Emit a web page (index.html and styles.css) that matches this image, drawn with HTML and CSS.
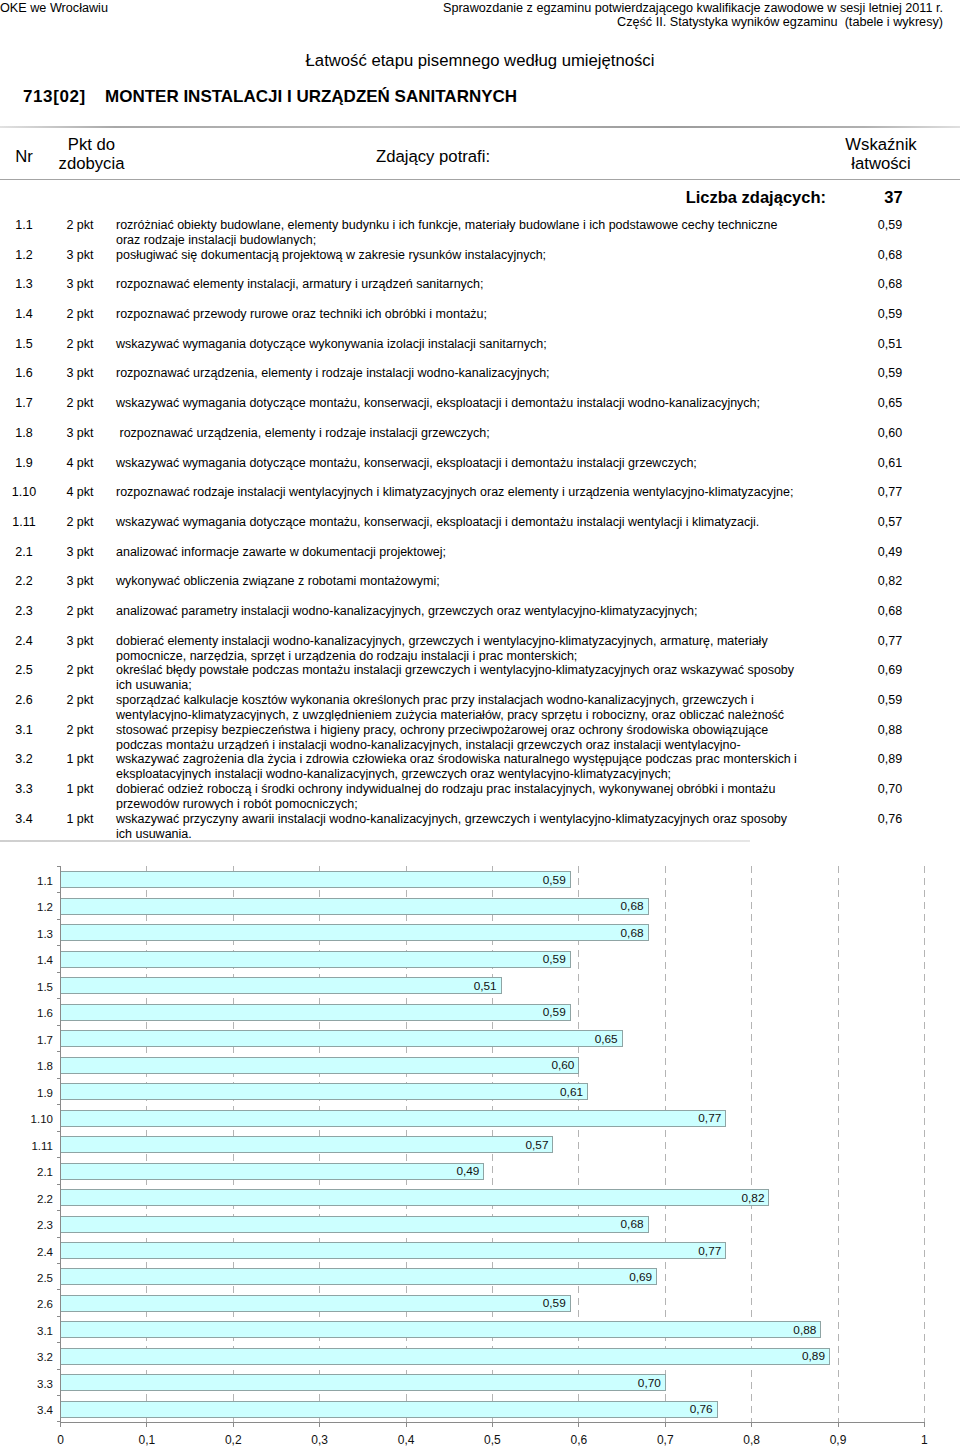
FILE: index.html
```html
<!DOCTYPE html>
<html lang="pl">
<head>
<meta charset="utf-8">
<title>Łatwość etapu pisemnego według umiejętności</title>
<link rel="stylesheet" href="styles.css">
</head>
<body>
<div class="page">
  <header class="top">
    <div class="top-left">OKE we Wrocławiu</div>
    <div class="top-right">
      <div>Sprawozdanie z egzaminu potwierdzającego kwalifikacje zawodowe w sesji letniej 2011 r.</div>
      <div>Część II. Statystyka wyników egzaminu&nbsp; (tabele i wykresy)</div>
    </div>
  </header>

  <h1 class="title">Łatwość etapu pisemnego według umiejętności</h1>
  <h2 class="subtitle"><span class="code">713[02]</span><span>MONTER INSTALACJI I URZĄDZEŃ SANITARNYCH</span></h2>

  <div class="rule-top"></div>
  <div class="thead">
    <div class="th th-single">Nr</div>
    <div class="th th-multi">Pkt do<br>zdobycia</div>
    <div class="th th-single th-desc">Zdający potrafi:</div>
    <div class="th th-multi">Wskaźnik<br>łatwości</div>
  </div>
  <div class="rule"></div>
  <div class="count">
    <div class="count-label">Liczba zdających:</div>
    <div class="count-val">37</div>
  </div>

  <div class="rows">
    <div class="row"><div class="c-nr">1.1</div><div class="c-pkt">2 pkt</div><div class="c-desc">rozróżniać obiekty budowlane, elementy budynku i ich funkcje, materiały budowlane i ich podstawowe cechy techniczne<br>oraz rodzaje instalacji budowlanych;</div><div class="c-val">0,59</div></div>
    <div class="row"><div class="c-nr">1.2</div><div class="c-pkt">3 pkt</div><div class="c-desc">posługiwać się dokumentacją projektową w zakresie rysunków instalacyjnych;</div><div class="c-val">0,68</div></div>
    <div class="row"><div class="c-nr">1.3</div><div class="c-pkt">3 pkt</div><div class="c-desc">rozpoznawać elementy instalacji, armatury i urządzeń sanitarnych;</div><div class="c-val">0,68</div></div>
    <div class="row"><div class="c-nr">1.4</div><div class="c-pkt">2 pkt</div><div class="c-desc">rozpoznawać przewody rurowe oraz techniki ich obróbki i montażu;</div><div class="c-val">0,59</div></div>
    <div class="row"><div class="c-nr">1.5</div><div class="c-pkt">2 pkt</div><div class="c-desc">wskazywać wymagania dotyczące wykonywania izolacji instalacji sanitarnych;</div><div class="c-val">0,51</div></div>
    <div class="row"><div class="c-nr">1.6</div><div class="c-pkt">3 pkt</div><div class="c-desc">rozpoznawać urządzenia, elementy i rodzaje instalacji wodno-kanalizacyjnych;</div><div class="c-val">0,59</div></div>
    <div class="row"><div class="c-nr">1.7</div><div class="c-pkt">2 pkt</div><div class="c-desc">wskazywać wymagania dotyczące montażu, konserwacji, eksploatacji i demontażu instalacji wodno-kanalizacyjnych;</div><div class="c-val">0,65</div></div>
    <div class="row"><div class="c-nr">1.8</div><div class="c-pkt">3 pkt</div><div class="c-desc">&nbsp;rozpoznawać urządzenia, elementy i rodzaje instalacji grzewczych;</div><div class="c-val">0,60</div></div>
    <div class="row"><div class="c-nr">1.9</div><div class="c-pkt">4 pkt</div><div class="c-desc">wskazywać wymagania dotyczące montażu, konserwacji, eksploatacji i demontażu instalacji grzewczych;</div><div class="c-val">0,61</div></div>
    <div class="row"><div class="c-nr">1.10</div><div class="c-pkt">4 pkt</div><div class="c-desc">rozpoznawać rodzaje instalacji wentylacyjnych i klimatyzacyjnych oraz elementy i urządzenia wentylacyjno-klimatyzacyjne;</div><div class="c-val">0,77</div></div>
    <div class="row"><div class="c-nr">1.11</div><div class="c-pkt">2 pkt</div><div class="c-desc">wskazywać wymagania dotyczące montażu, konserwacji, eksploatacji i demontażu instalacji wentylacji i klimatyzacji.</div><div class="c-val">0,57</div></div>
    <div class="row"><div class="c-nr">2.1</div><div class="c-pkt">3 pkt</div><div class="c-desc">analizować informacje zawarte w dokumentacji projektowej;</div><div class="c-val">0,49</div></div>
    <div class="row"><div class="c-nr">2.2</div><div class="c-pkt">3 pkt</div><div class="c-desc">wykonywać obliczenia związane z robotami montażowymi;</div><div class="c-val">0,82</div></div>
    <div class="row"><div class="c-nr">2.3</div><div class="c-pkt">2 pkt</div><div class="c-desc">analizować parametry instalacji wodno-kanalizacyjnych, grzewczych oraz wentylacyjno-klimatyzacyjnych;</div><div class="c-val">0,68</div></div>
    <div class="row"><div class="c-nr">2.4</div><div class="c-pkt">3 pkt</div><div class="c-desc">dobierać elementy instalacji wodno-kanalizacyjnych, grzewczych i wentylacyjno-klimatyzacyjnych, armaturę, materiały<br>pomocnicze, narzędzia, sprzęt i urządzenia do rodzaju instalacji i prac monterskich;</div><div class="c-val">0,77</div></div>
    <div class="row"><div class="c-nr">2.5</div><div class="c-pkt">2 pkt</div><div class="c-desc">określać błędy powstałe podczas montażu instalacji grzewczych i wentylacyjno-klimatyzacyjnych oraz wskazywać sposoby<br>ich usuwania;</div><div class="c-val">0,69</div></div>
    <div class="row"><div class="c-nr">2.6</div><div class="c-pkt">2 pkt</div><div class="c-desc">sporządzać kalkulacje kosztów wykonania określonych prac przy instalacjach wodno-kanalizacyjnych, grzewczych i<br>wentylacyjno-klimatyzacyjnych, z uwzględnieniem zużycia materiałów, pracy sprzętu i robocizny, oraz obliczać należność</div><div class="c-val">0,59</div></div>
    <div class="row"><div class="c-nr">3.1</div><div class="c-pkt">2 pkt</div><div class="c-desc">stosować przepisy bezpieczeństwa i higieny pracy, ochrony przeciwpożarowej oraz ochrony środowiska obowiązujące<br>podczas montażu urządzeń i instalacji wodno-kanalizacyjnych, instalacji grzewczych oraz instalacji wentylacyjno-</div><div class="c-val">0,88</div></div>
    <div class="row"><div class="c-nr">3.2</div><div class="c-pkt">1 pkt</div><div class="c-desc">wskazywać zagrożenia dla życia i zdrowia człowieka oraz środowiska naturalnego występujące podczas prac monterskich i<br>eksploatacyjnych instalacji wodno-kanalizacyjnych, grzewczych oraz wentylacyjno-klimatyzacyjnych;</div><div class="c-val">0,89</div></div>
    <div class="row"><div class="c-nr">3.3</div><div class="c-pkt">1 pkt</div><div class="c-desc">dobierać odzież roboczą i środki ochrony indywidualnej do rodzaju prac instalacyjnych, wykonywanej obróbki i montażu<br>przewodów rurowych i robót pomocniczych;</div><div class="c-val">0,70</div></div>
    <div class="row"><div class="c-nr">3.4</div><div class="c-pkt">1 pkt</div><div class="c-desc">wskazywać przyczyny awarii instalacji wodno-kanalizacyjnych, grzewczych i wentylacyjno-klimatyzacyjnych oraz sposoby<br>ich usuwania.</div><div class="c-val">0,76</div></div>
  </div>
  <div class="rule-bottom"></div>

  <div class="chart">
    <div class="chart-body">
      <div class="cats">
        <div class="cat">1.1</div><div class="cat">1.2</div><div class="cat">1.3</div><div class="cat">1.4</div>
        <div class="cat">1.5</div><div class="cat">1.6</div><div class="cat">1.7</div><div class="cat">1.8</div>
        <div class="cat">1.9</div><div class="cat">1.10</div><div class="cat">1.11</div><div class="cat">2.1</div>
        <div class="cat">2.2</div><div class="cat">2.3</div><div class="cat">2.4</div><div class="cat">2.5</div>
        <div class="cat">2.6</div><div class="cat">3.1</div><div class="cat">3.2</div><div class="cat">3.3</div>
        <div class="cat">3.4</div>
      </div>
      <div class="plot">
        <div class="grid"><span></span><span></span><span></span><span></span><span></span><span></span><span></span><span></span><span></span><span></span></div>
        <div class="bars">
          <div class="band"><div class="bar" style="width:59%">0,59</div></div>
          <div class="band"><div class="bar" style="width:68%">0,68</div></div>
          <div class="band"><div class="bar" style="width:68%">0,68</div></div>
          <div class="band"><div class="bar" style="width:59%">0,59</div></div>
          <div class="band"><div class="bar" style="width:51%">0,51</div></div>
          <div class="band"><div class="bar" style="width:59%">0,59</div></div>
          <div class="band"><div class="bar" style="width:65%">0,65</div></div>
          <div class="band"><div class="bar" style="width:60%">0,60</div></div>
          <div class="band"><div class="bar" style="width:61%">0,61</div></div>
          <div class="band"><div class="bar" style="width:77%">0,77</div></div>
          <div class="band"><div class="bar" style="width:57%">0,57</div></div>
          <div class="band"><div class="bar" style="width:49%">0,49</div></div>
          <div class="band"><div class="bar" style="width:82%">0,82</div></div>
          <div class="band"><div class="bar" style="width:68%">0,68</div></div>
          <div class="band"><div class="bar" style="width:77%">0,77</div></div>
          <div class="band"><div class="bar" style="width:69%">0,69</div></div>
          <div class="band"><div class="bar" style="width:59%">0,59</div></div>
          <div class="band"><div class="bar" style="width:88%">0,88</div></div>
          <div class="band"><div class="bar" style="width:89%">0,89</div></div>
          <div class="band"><div class="bar" style="width:70%">0,70</div></div>
          <div class="band"><div class="bar" style="width:76%">0,76</div></div>
        </div>
      </div>
    </div>
    <div class="xticks"><span></span><span></span><span></span><span></span><span></span><span></span><span></span><span></span><span></span><span></span></div>
    <div class="xlabels"><span>0</span><span>0,1</span><span>0,2</span><span>0,3</span><span>0,4</span><span>0,5</span><span>0,6</span><span>0,7</span><span>0,8</span><span>0,9</span><span>1</span></div>
  </div>
</div>
</body>
</html>
```

FILE: styles.css
```css
html, body {
  margin: 0;
  padding: 0;
  background: #ffffff;
}

body {
  font-family: "Liberation Sans", Arial, "Noto Sans", sans-serif;
  color: #000000;
}

.page {
  width: 960px;
}

/* ---------- page header ---------- */
.top {
  display: flex;
  justify-content: space-between;
  font-size: 12.65px;
  line-height: 14px;
}

.top-left {
  padding-top: 1px;
}

.top-right {
  text-align: right;
  padding-right: 17px;
  padding-top: 1px;
}

.title {
  margin: 22px 0 0;
  text-align: center;
  font-size: 16.7px;
  line-height: 20px;
  font-weight: normal;
}

.subtitle {
  margin: 16px 0 0;
  padding-left: 23px;
  display: flex;
  font-size: 17px;
  line-height: 20px;
  font-weight: bold;
}

.subtitle .code {
  width: 82px;
  letter-spacing: 0.6px;
}

/* ---------- table ---------- */
.rule-top {
  margin-top: 19px;
  height: 2px;
  background: linear-gradient(to right, #e2e2e2 0%, #a8a8a8 12%, #b8b8b8 40%, #9c9c9c 70%, #b0b0b0 90%, #e0e0e0 100%);
}

.thead {
  display: grid;
  grid-template-columns: 48px 87px 696px 100px;
  height: 51px;
  font-size: 16.7px;
  line-height: 19px;
}

.th {
  text-align: center;
}

.th-single {
  padding-top: 18.5px;
}

.th-multi {
  padding-top: 6.5px;
}

.th-desc {
  text-align: left;
  padding-left: 241px;
}

.rule {
  height: 1px;
  background: #a4a4a4;
}

.count {
  display: grid;
  grid-template-columns: 826px 135px;
  padding-top: 7px;
  font-size: 16.5px;
  line-height: 20px;
  font-weight: bold;
}

.count-label {
  text-align: right;
}

.count-val {
  text-align: center;
}

.rows {
  margin-top: 11px;
}

.row {
  display: grid;
  grid-template-columns: 48px 64px 738px 80px;
  height: 29.7px;
  font-size: 12.5px;
  line-height: 15px;
}

.c-nr,
.c-pkt,
.c-val {
  text-align: center;
}

.c-desc {
  padding-left: 4px;
  white-space: nowrap;
  height: 28px;
  overflow: hidden;
}

.rule-bottom {
  width: 750px;
  height: 2px;
  margin-top: -1.5px;
  background: linear-gradient(to right, #cfcfcf, #dcdcdc 60%, #e6e6e6);
}

/* ---------- chart ---------- */
.chart {
  margin-top: 24px;
}

.chart-body {
  display: grid;
  grid-template-columns: 60px 865px;
}

.cat {
  position: relative;
  box-sizing: border-box;
  height: 26.47px;
  padding: 2px 7px 0 0;
  text-align: right;
  font-size: 11.5px;
  line-height: 26.47px;
  color: #111;
}

.cat::before {
  content: "";
  position: absolute;
  right: 0;
  top: 0;
  width: 3px;
  height: 1px;
  background: #8a8a8a;
}

.cat:last-child::after {
  content: "";
  position: absolute;
  right: 0;
  bottom: 0;
  width: 3px;
  height: 1px;
  background: #8a8a8a;
}

.plot {
  position: relative;
  border-left: 1px solid #8a8a8a;
  border-bottom: 1px solid #8a8a8a;
}

.grid {
  position: absolute;
  inset: 0;
  display: grid;
  grid-template-columns: repeat(10, 1fr);
}

.grid span {
  position: relative;
}

.grid span::after {
  content: "";
  position: absolute;
  right: 0;
  top: 0;
  bottom: 0;
  width: 1px;
  background: repeating-linear-gradient(to bottom, #b4b4b4 0 7px, transparent 7px 12px);
}

.bars {
  position: relative;
}

.band {
  box-sizing: border-box;
  height: 26.47px;
  padding-top: 5.5px;
}

.bar {
  box-sizing: border-box;
  height: 17px;
  display: flex;
  align-items: center;
  justify-content: flex-end;
  padding-right: 4px;
  background: #ccffff;
  border: 1px solid #8fa4a4;
  border-left: none;
  font-size: 11.8px;
  color: #111;
}

.xticks {
  display: flex;
  width: 865px;
  height: 4px;
  margin-left: 60px;
}

.xticks span {
  flex: 1;
  border-left: 1px solid #8a8a8a;
}

.xticks span:last-child {
  border-right: 1px solid #8a8a8a;
}

.xlabels {
  display: flex;
  margin: 6px 0 0 17.3px;
  font-size: 12px;
  line-height: 14px;
  color: #111;
}

.xlabels span {
  width: 86.4px;
  flex: none;
  text-align: center;
}
```
